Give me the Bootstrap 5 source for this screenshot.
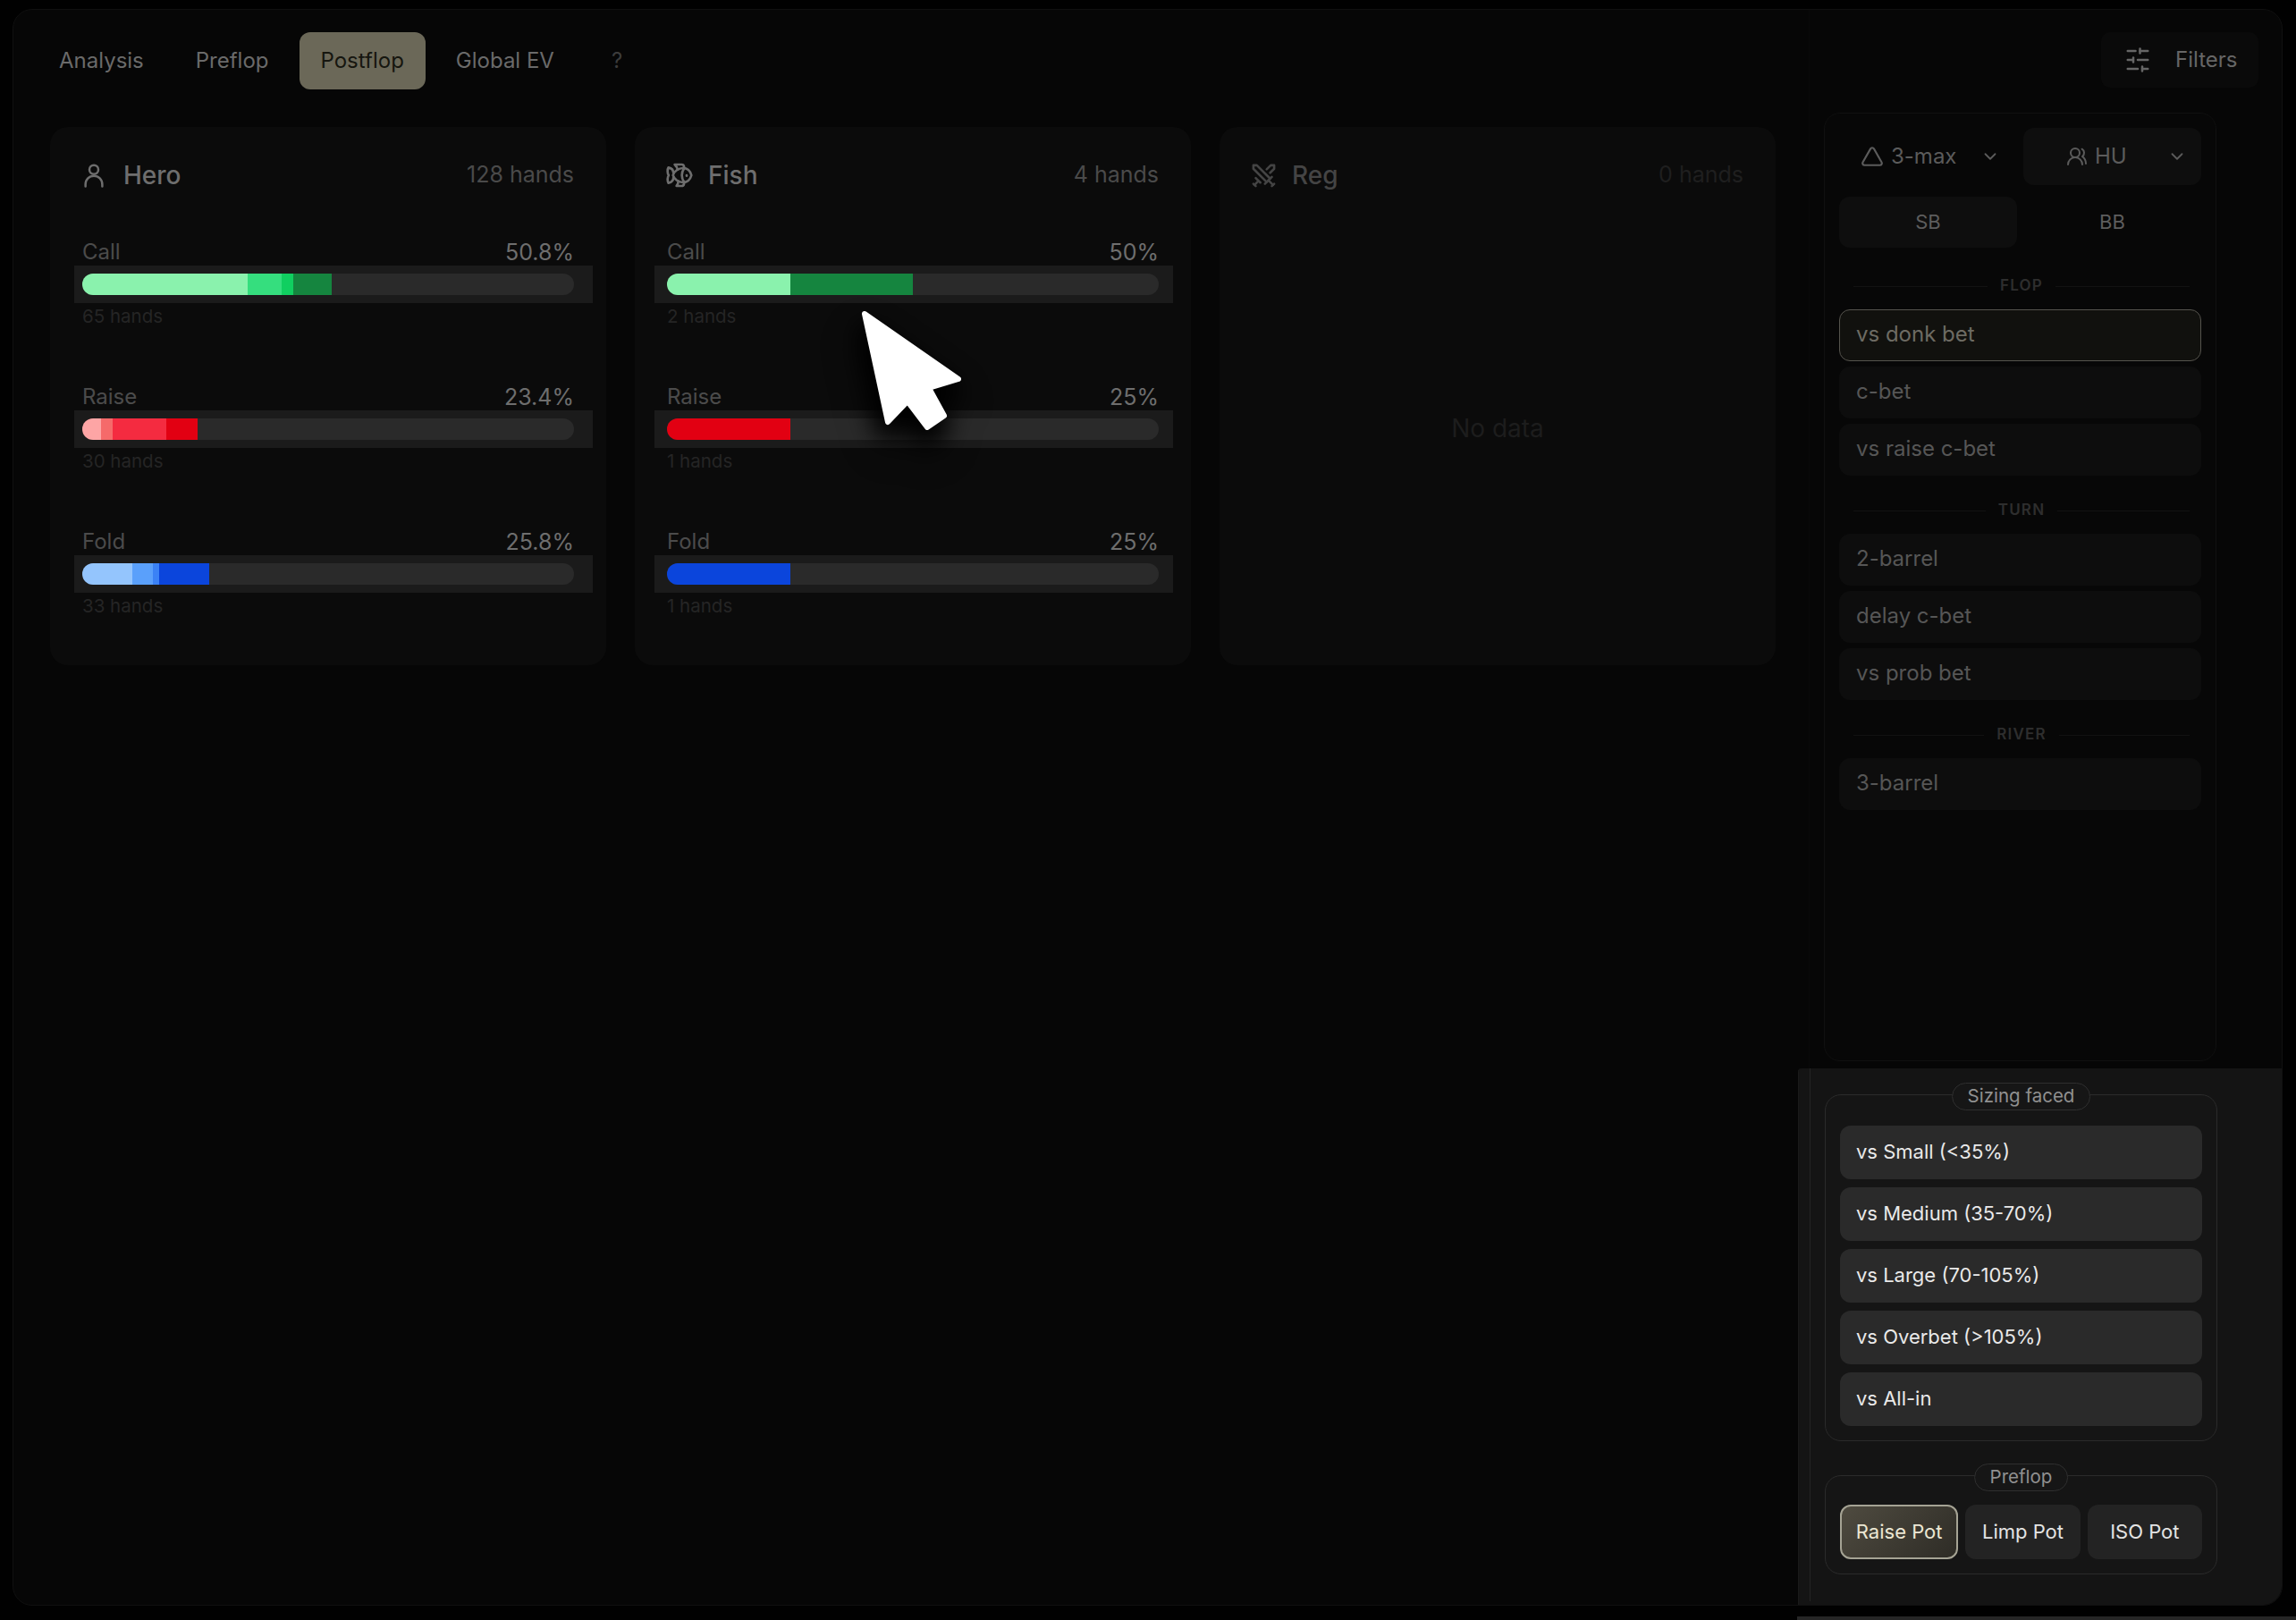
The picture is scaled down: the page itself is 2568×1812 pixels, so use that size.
<!DOCTYPE html>
<html lang="en">
<head>
    <meta charset="UTF-8">
    <title>Postflop stats</title>
    <link rel="stylesheet" href="https://cdn.jsdelivr.net/npm/bootstrap@5.3.0/dist/css/bootstrap.min.css">
    <style>
        html, body { height: 100%; }
        body {
            background: #010101;
            font-family: Inter, "Liberation Sans", sans-serif;
            font-size: 24px;
            overflow: hidden;
            position: relative;
        }
        svg.ico { fill: none; stroke: currentColor; stroke-width: 2; stroke-linecap: round; stroke-linejoin: round; flex: none; }

        .app-frame {
            margin: 10px 15px 12px 14px;
            height: 1786px;
            background: #060606;
            border: 1px solid #101010;
            border-radius: 22px;
            overflow: hidden;
        }
        .main-col { width: 2008px; flex: none; padding: 25px 0 0 27px; }
        .side-col { flex: 1; min-width: 0; padding-top: 25px; border-left: 1px solid #090909; }

        /* top tabs */
        .tab-row { gap: 10px; }
        .tab-item {
            height: 64px;
            padding: 0 24px;
            color: #6a6a6a;
            border-radius: 12px;
            display: flex;
            align-items: center;
        }
        .tab-item.is-on { background: #6b6858; color: #16160f; }
        .tab-item.is-help { color: #3c3c3c; padding-left: 30px; }
        .filter-btn {
            width: 176px;
            height: 62px;
            margin: 0 26px 0 auto;
            padding-left: 26px;
            gap: 27px;
            color: #666;
            background: #0a0a0a;
            border-radius: 10px;
        }

        /* player cards */
        .cards-grid {
            display: grid;
            grid-template-columns: repeat(3, 622px);
            gap: 32px;
            margin: 42px 0 0 14px;
        }
        .player-box {
            height: 602px;
            padding: 38px 36px 0;
            background: #0b0b0b;
            border-radius: 20px;
        }
        .player-head { height: 32px; margin-bottom: 56px; color: #6e6e6e; }
        .player-name { font-size: 28px; line-height: 32px; font-weight: 500; }
        .player-count { color: #4a4a4a; font-size: 25px; }
        .head-ico { margin-left: -2px; margin-right: 16px; }
        .hero-box .head-ico { margin-right: 18px; }
        .stat-row { height: 162px; }
        .stat-top { height: 26px; line-height: 28px; font-size: 24px; color: #4b4b4b; margin-bottom: 3px; }
        .stat-pct { color: #6e6e6e; font-size: 25px; }
        .stat-band { height: 42px; background: #1b1b1b; padding-top: 9px; }
        .hero-box .stat-band { margin: 0 -21px 0 -9px; padding-left: 9px; padding-right: 21px; }
        .fish-box .stat-band { margin: 0 -16px 0 -14px; padding-left: 14px; padding-right: 16px; }
        .stat-track { height: 24px; background: #2a2a2a; border-radius: 12px; overflow: hidden; }
        .stat-track > div { height: 100%; }
        .stat-hands { margin-top: 2px; font-size: 20.5px; line-height: 26px; color: #252525; }
        .reg-box .player-head { color: #444; }
        .reg-box .player-count { color: #1f1f1f; }
        .reg-empty { height: 482px; margin-top: -30px; color: #1d1d1d; font-size: 28px; }

        /* filters sidebar */
        .side-panel {
            height: 1061px;
            width: 439px;
            margin: 28px 0 0 16px;
            padding: 16px;
            background: #070707;
            border: 1px solid #101010;
            border-radius: 18px;
        }
        .pick-btn {
            width: 199px;
            height: 64px;
            color: #5b5b5b;
            font-size: 24px;
            border-radius: 12px;
        }
        .pick-btn.is-filled { background: #0e0e0e; }
        .pick-arrow { margin-right: 19px; }
        .seat-btn {
            width: 199px;
            height: 57px;
            margin-top: 13px;
            color: #5d5d5d;
            font-size: 22px;
            border-radius: 12px;
        }
        .seat-btn.is-filled { background: #0e0e0e; }
        .street-label {
            margin: 33px 13px 16px 16px;
            height: 20px;
            color: #2e2e2e;
            font-size: 17px;
            font-weight: 600;
            letter-spacing: 1.2px;
            gap: 14px;
        }
        .spot-btn + .street-label { margin-top: 29px; }
        .street-label::before, .street-label::after { content: ""; flex: 1; height: 1px; background: #121212; }
        .spot-btn {
            height: 58px;
            margin-bottom: 6px;
            padding: 0 18px 2px;
            color: #565656;
            background: #0d0d0d;
            border: 1px solid #0d0d0d;
            border-radius: 12px;
        }
        .spot-btn.is-on { background: #11110e; border-color: #55534d; color: #6d6b63; }

        .lit-area {
            flex: 1;
            margin: 8px 0 0 -13px;
            padding: 29px 0 0 29px;
            background: #141414;
            border-radius: 4px 0 0 0;
            border-left: 1px solid #1a1a1a;
            position: relative;
        }
        .lit-area::before {
            content: "";
            position: absolute;
            left: 12px;
            top: 0;
            bottom: 4px;
            width: 1px;
            background: #242424;
        }
        .group-box {
            width: 439px;
            padding: 34px 16px 16px;
            background: #151515;
            border: 1.5px solid #2b2b2b;
            border-radius: 18px;
            position: relative;
        }
        .group-box + .group-box { margin-top: 38px; padding-top: 32px; }
        .group-title {
            position: absolute;
            left: 50%;
            transform: translateX(-50%);
            top: -14px;
            height: 31px;
            padding: 0 17px;
            background: #161616;
            border: 1.5px solid #2f2f2f;
            border-radius: 16px;
            color: #909090;
            font-size: 20.5px;
            white-space: nowrap;
        }
        .size-btn {
            height: 60px;
            padding: 0 18px 2px;
            margin-bottom: 9px;
            color: #e9e9e9;
            background: #2a2a2a;
            border-radius: 12px;
            font-size: 22px;
        }
        .size-btn:last-child { margin-bottom: 0; }
        .pot-btn {
            height: 61px;
            flex: 1 1 0;
            min-width: 0;
            color: #e4e4e4;
            background: #232323;
            border-radius: 12px;
            font-size: 22px;
        }
        .pot-btn.is-on {
            color: #ece7d4;
            background: linear-gradient(135deg, #4f4b40, #2e2c26);
            border: 2px solid #a5a394;
        }
        .bottom-strip { margin-left: 2010px; height: 4px; background: #262626; }

        /* pointer over the page */
        .big-pointer {
            position: absolute;
            left: 950px;
            top: 335px;
            width: 140px;
            height: 160px;
            overflow: visible;
            filter: drop-shadow(-3px 14px 14px rgba(0, 0, 0, .95)) drop-shadow(0 12px 12px rgba(0, 0, 0, .8));
        }
    </style>
</head>
<body>
    <div class="app-frame d-flex">
        <div class="main-col">
            <!-- Tabs -->
            <div class="d-flex tab-row">
                <div class="tab-item">Analysis</div>
                <div class="tab-item">Preflop</div>
                <div class="tab-item is-on">Postflop</div>
                <div class="tab-item">Global EV</div>
                <div class="tab-item is-help">?</div>
            </div>

            <div class="cards-grid">
                <!-- Hero -->
                <div class="player-box hero-box">
                    <div class="player-head d-flex align-items-center">
                        <svg class="ico head-ico" width="30" height="30" viewBox="0 0 24 24"><circle cx="12" cy="7" r="4"/><path d="M4.5 22v-2a7.5 7.5 0 0 1 15 0v2"/></svg>
                        <span class="player-name">Hero</span>
                        <span class="player-count ms-auto">128 hands</span>
                    </div>
                    <div class="stat-row">
                        <div class="stat-top d-flex justify-content-between"><span>Call</span><span class="stat-pct">50.8%</span></div>
                        <div class="stat-band"><div class="stat-track d-flex">
                            <div style="width:33.6%;background:#8af2ad"></div><div style="width:6.9%;background:#35de7e"></div><div style="width:2.4%;background:#10cf60"></div><div style="width:7.9%;background:#15853f"></div>
                        </div></div>
                        <div class="stat-hands">65 hands</div>
                    </div>
                    <div class="stat-row">
                        <div class="stat-top d-flex justify-content-between"><span>Raise</span><span class="stat-pct">23.4%</span></div>
                        <div class="stat-band"><div class="stat-track d-flex">
                            <div style="width:3.9%;background:#fda5a5"></div><div style="width:2.3%;background:#f56a6a"></div><div style="width:10.9%;background:#f42b40"></div><div style="width:6.3%;background:#e20012"></div>
                        </div></div>
                        <div class="stat-hands">30 hands</div>
                    </div>
                    <div class="stat-row">
                        <div class="stat-top d-flex justify-content-between"><span>Fold</span><span class="stat-pct">25.8%</span></div>
                        <div class="stat-band"><div class="stat-track d-flex">
                            <div style="width:10.2%;background:#94c5fd"></div><div style="width:4.2%;background:#5aa0fb"></div><div style="width:1.3%;background:#3b82f6"></div><div style="width:10.1%;background:#0b45dc"></div>
                        </div></div>
                        <div class="stat-hands">33 hands</div>
                    </div>
                </div>

                <!-- Fish -->
                <div class="player-box fish-box">
                    <div class="player-head d-flex align-items-center">
                        <svg class="ico head-ico" width="32" height="32" viewBox="0 0 24 24"><path d="M6.5 12c.94-3.46 4.94-6 8.5-6 3.56 0 6.06 2.54 7 6-.94 3.47-3.44 6-7 6s-7.56-2.53-8.5-6Z"/><path d="M18 12v.5"/><path d="M16 17.93a9.77 9.77 0 0 1 0-11.86"/><path d="M7 10.67C7 8 5.58 5.97 2.73 5.5c-1 1.5-1 5 .23 6.5-1.24 1.5-1.24 5-.23 6.5C5.58 18.03 7 16 7 13.33"/><path d="M10.46 7.26C10.2 5.88 9.17 4.24 8 3h5.8a2 2 0 0 1 1.98 1.67l.23 1.4"/><path d="m16.01 17.93-.23 1.4A2 2 0 0 1 13.8 21H9.5a5.96 5.96 0 0 0 1.49-3.98"/></svg>
                        <span class="player-name">Fish</span>
                        <span class="player-count ms-auto">4 hands</span>
                    </div>
                    <div class="stat-row">
                        <div class="stat-top d-flex justify-content-between"><span>Call</span><span class="stat-pct">50%</span></div>
                        <div class="stat-band"><div class="stat-track d-flex">
                            <div style="width:25%;background:#8af2ad"></div><div style="width:25%;background:#15853f"></div>
                        </div></div>
                        <div class="stat-hands">2 hands</div>
                    </div>
                    <div class="stat-row">
                        <div class="stat-top d-flex justify-content-between"><span>Raise</span><span class="stat-pct">25%</span></div>
                        <div class="stat-band"><div class="stat-track d-flex">
                            <div style="width:25%;background:#e20012"></div>
                        </div></div>
                        <div class="stat-hands">1 hands</div>
                    </div>
                    <div class="stat-row">
                        <div class="stat-top d-flex justify-content-between"><span>Fold</span><span class="stat-pct">25%</span></div>
                        <div class="stat-band"><div class="stat-track d-flex">
                            <div style="width:25%;background:#0b45dc"></div>
                        </div></div>
                        <div class="stat-hands">1 hands</div>
                    </div>
                </div>

                <!-- Reg -->
                <div class="player-box reg-box">
                    <div class="player-head d-flex align-items-center">
                        <svg class="ico head-ico" width="31" height="31" viewBox="0 0 24 24"><polyline points="14.5 17.5 3 6 3 3 6 3 17.5 14.5"/><line x1="13" x2="19" y1="19" y2="13"/><line x1="16" x2="20" y1="16" y2="20"/><line x1="19" x2="21" y1="21" y2="19"/><polyline points="14.5 6.5 18 3 21 3 21 6 17.5 9.5"/><line x1="5" x2="9" y1="14" y2="18"/><line x1="7" x2="4" y1="17" y2="20"/><line x1="3" x2="5" y1="19" y2="21"/></svg>
                        <span class="player-name">Reg</span>
                        <span class="player-count ms-auto">0 hands</span>
                    </div>
                    <div class="reg-empty d-flex align-items-center justify-content-center">No data</div>
                </div>
            </div>
        </div>

        <div class="side-col d-flex flex-column">
            <div class="filter-btn d-flex align-items-center">
                <svg class="ico" width="30" height="30" viewBox="0 0 24 24"><line x1="21" x2="14" y1="4" y2="4"/><line x1="10" x2="3" y1="4" y2="4"/><line x1="21" x2="12" y1="12" y2="12"/><line x1="8" x2="3" y1="12" y2="12"/><line x1="21" x2="16" y1="20" y2="20"/><line x1="12" x2="3" y1="20" y2="20"/><line x1="14" x2="14" y1="2" y2="6"/><line x1="8" x2="8" y1="10" y2="14"/><line x1="16" x2="16" y1="18" y2="22"/></svg>
                <span>Filters</span>
            </div>

            <div class="side-panel">
                <div class="d-flex justify-content-between">
                    <div class="pick-btn d-flex align-items-center ps-4">
                        <svg class="ico me-2" width="26" height="26" viewBox="0 0 24 24"><path d="M13.73 4a2 2 0 0 0-3.46 0l-8 14A2 2 0 0 0 4 21h16a2 2 0 0 0 1.73-3Z"/></svg>
                        <span>3-max</span>
                        <svg class="ico ms-auto pick-arrow" width="22" height="22" viewBox="0 0 24 24"><path d="m6 9 6 6 6-6"/></svg>
                    </div>
                    <div class="pick-btn is-filled d-flex align-items-center ps-5">
                        <svg class="ico me-2" width="24" height="24" viewBox="0 0 24 24"><path d="M18 21a8 8 0 0 0-16 0"/><circle cx="10" cy="8" r="5"/><path d="M22 20c0-3.37-2-6.5-4-8a5 5 0 0 0-.45-8.3"/></svg>
                        <span>HU</span>
                        <svg class="ico ms-auto me-3" width="22" height="22" viewBox="0 0 24 24"><path d="m6 9 6 6 6-6"/></svg>
                    </div>
                </div>
                <div class="d-flex justify-content-between">
                    <div class="seat-btn is-filled d-flex align-items-center justify-content-center">SB</div>
                    <div class="seat-btn d-flex align-items-center justify-content-center">BB</div>
                </div>

                <div class="street-label d-flex align-items-center"><span>FLOP</span></div>
                <div class="spot-btn is-on d-flex align-items-center">vs donk bet</div>
                <div class="spot-btn d-flex align-items-center">c-bet</div>
                <div class="spot-btn d-flex align-items-center">vs raise c-bet</div>

                <div class="street-label d-flex align-items-center"><span>TURN</span></div>
                <div class="spot-btn d-flex align-items-center">2-barrel</div>
                <div class="spot-btn d-flex align-items-center">delay c-bet</div>
                <div class="spot-btn d-flex align-items-center">vs prob bet</div>

                <div class="street-label d-flex align-items-center"><span>RIVER</span></div>
                <div class="spot-btn d-flex align-items-center">3-barrel</div>
            </div>

            <div class="lit-area">
                <div class="group-box">
                    <div class="group-title d-flex align-items-center">Sizing faced</div>
                    <div class="size-btn d-flex align-items-center">vs Small (&lt;35%)</div>
                    <div class="size-btn d-flex align-items-center">vs Medium (35-70%)</div>
                    <div class="size-btn d-flex align-items-center">vs Large (70-105%)</div>
                    <div class="size-btn d-flex align-items-center">vs Overbet (&gt;105%)</div>
                    <div class="size-btn d-flex align-items-center">vs All-in</div>
                </div>
                <div class="group-box">
                    <div class="group-title d-flex align-items-center">Preflop</div>
                    <div class="d-flex gap-2">
                        <div class="pot-btn is-on d-flex align-items-center justify-content-center">Raise Pot</div>
                        <div class="pot-btn d-flex align-items-center justify-content-center">Limp Pot</div>
                        <div class="pot-btn d-flex align-items-center justify-content-center">ISO Pot</div>
                    </div>
                </div>
            </div>
        </div>
    </div>
    <div class="bottom-strip"></div>

    <svg class="big-pointer" viewBox="0 0 140 160"><path d="M17 16 122 89 89 99 106 130 87 143 65 114 43 137Z" fill="#fff" stroke="#fff" stroke-width="6" stroke-linejoin="round"/></svg>

    <script src="https://cdn.jsdelivr.net/npm/bootstrap@5.3.0/dist/js/bootstrap.bundle.min.js"></script>
</body>
</html>
